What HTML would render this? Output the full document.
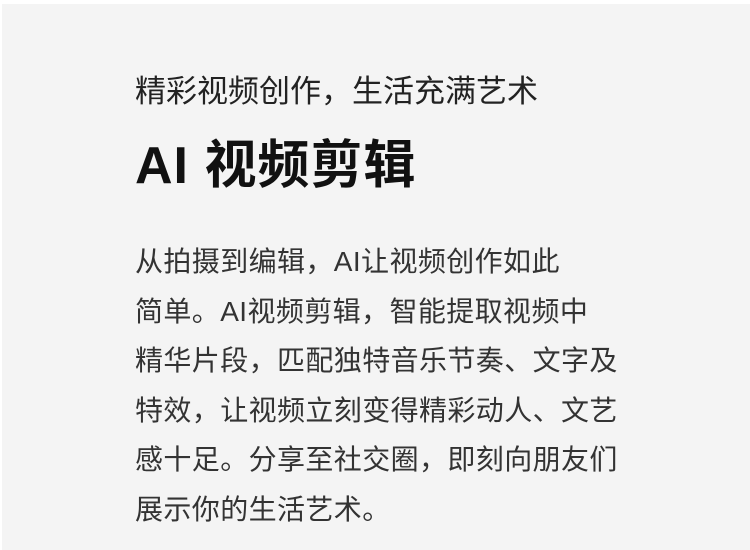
<!DOCTYPE html>
<html><head><meta charset="utf-8"><style>
html,body{margin:0;padding:0;}
body{width:750px;height:550px;background:#fff;position:relative;overflow:hidden;font-family:"Liberation Sans","Noto Sans CJK SC",sans-serif;}
.bg{position:absolute;left:2px;top:4px;right:0;bottom:0;background:#f4f4f4;}
.t1{position:absolute;left:135px;top:72px;font-size:31px;line-height:40px;color:#222;white-space:nowrap;}
.t2{position:absolute;left:135px;top:135px;font-size:52px;line-height:62px;font-weight:bold;color:#111;white-space:nowrap;letter-spacing:1px;}
.body{position:absolute;left:135px;top:237px;font-size:28px;line-height:49.5px;color:#333;letter-spacing:0.4px;white-space:nowrap;}
</style></head><body>
<div class="bg"></div>
<div class="t1">精彩视频创作，生活充满艺术</div>
<div class="t2">AI 视频剪辑</div>
<div class="body">从拍摄到编辑，AI让视频创作如此<br>简单。AI视频剪辑，智能提取视频中<br>精华片段，匹配独特音乐节奏、文字及<br>特效，让视频立刻变得精彩动人、文艺<br>感十足。分享至社交圈，即刻向朋友们<br>展示你的生活艺术。</div>
</body></html>
